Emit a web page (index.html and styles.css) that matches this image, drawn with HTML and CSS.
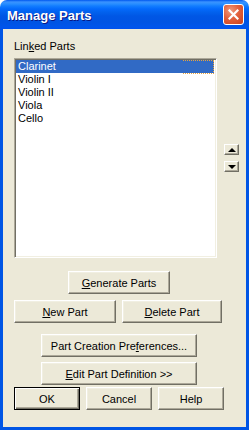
FILE: index.html
```html
<!DOCTYPE html>
<html lang="en">
<head>
    <meta charset="UTF-8">
    <meta name="viewport" content="width=device-width, initial-scale=1.0">
    <title>Manage Parts</title>
    <link rel="stylesheet" href="styles.css">
</head>
<body>

    <div class="window">
        <!-- Caption bar -->
        <div class="titlebar">
            <span class="title">Manage Parts</span>
            <button type="button" class="close" aria-label="Close">
                <svg width="11" height="11" viewBox="0 0 11 11">
                    <path d="M1.5 1.5 L9.5 9.5 M9.5 1.5 L1.5 9.5" stroke="#fff" stroke-width="2.2" stroke-linecap="square"/>
                </svg>
            </button>
        </div>

        <div class="client">
            <label class="listLabel" for="partsList">Lin<u>k</u>ed Parts</label>

            <!-- List of linked parts with reorder buttons -->
            <div class="listRow">
                <ul class="partsList" id="partsList">
                    <li class="selected">Clarinet</li>
                    <li>Violin I</li>
                    <li>Violin II</li>
                    <li>Viola</li>
                    <li>Cello</li>
                </ul>
                <div class="orderButtons">
                    <button type="button" class="arrow up" aria-label="Move up"></button>
                    <button type="button" class="arrow down" aria-label="Move down"></button>
                </div>
            </div>

            <div class="row generateRow">
                <button type="button" class="btn generate"><u>G</u>enerate Parts</button>
            </div>

            <div class="row partRow">
                <button type="button" class="btn newPart"><u>N</u>ew Part</button>
                <button type="button" class="btn deletePart"><u>D</u>elete Part</button>
            </div>

            <div class="row prefsRow">
                <button type="button" class="btn wide">Part Creation Pre<u>f</u>erences...</button>
            </div>

            <div class="row editRow">
                <button type="button" class="btn wide"><u>E</u>dit Part Definition &gt;&gt;</button>
            </div>

            <div class="row dialogRow">
                <button type="button" class="btn dialog default">OK</button>
                <button type="button" class="btn dialog">Cancel</button>
                <button type="button" class="btn dialog">Help</button>
            </div>
        </div>
    </div>

</body>
</html>
```

FILE: styles.css
```css
body { margin: 0; background: #fff; font-family: "Liberation Sans", Arial, sans-serif; font-size: 11px; }

.window {
    width: 249px;
    height: 430px;
    display: flex;
    flex-direction: column;
    box-sizing: border-box;
}

/* XP style caption */
.titlebar {
    height: 29px;
    flex: none;
    display: flex;
    align-items: center;
    padding: 0 5px 0 7px;
    border-radius: 7px 7px 0 0;
    background: linear-gradient(#0058ee 0, #3a93ff 2px, #288eff 4px, #127dff 6px, #0369fc 9px, #0262ee 12px, #0057e5 16px, #0054e3 22px, #0055eb 27px, #0050ee 29px);
}

.title {
    flex: 1;
    color: #fff;
    font-weight: bold;
    font-size: 13px;
    text-shadow: 1px 1px #0a1883;
    padding-top: 1px;
}

.close {
    width: 21px;
    height: 21px;
    padding: 0;
    border: 1px solid #fff;
    border-radius: 3px;
    background: radial-gradient(circle at 35% 30%, #f09a7c 0, #e2603c 45%, #c8401d 100%);
    display: flex;
    align-items: center;
    justify-content: center;
}

.client {
    flex: 1;
    background: #ece9d8;
    border: solid #0055e5;
    border-width: 0 3px 3px 3px;
    box-shadow: inset 0 0 0 0 transparent, 0 1px 0 #0019cf;
    padding: 11px 0 0 11px;
    display: flex;
    flex-direction: column;
}

.listLabel {
    line-height: 13px;
    margin-bottom: 5px;
}

.listRow {
    display: flex;
    align-items: center;
}

.partsList {
    list-style: none;
    margin: 0;
    padding: 0;
    width: 203px;
    height: 200px;
    box-sizing: border-box;
    background: #fff;
    border: 1px solid;
    border-color: #aca899 #fff #fff #aca899;
    box-shadow: inset 1px 1px #716f64, inset -1px -1px #f1efe2;
    padding: 1px 2px 2px 1px;
}

.partsList li {
    height: 13px;
    line-height: 13px;
    padding-left: 2px;
    position: relative;
}

.partsList .selected {
    background: #316ac5;
    color: #fff;
}

/* focus rectangle, only visible past the text */
.partsList .selected::after {
    content: "";
    position: absolute;
    top: 0;
    right: 0;
    width: 30px;
    height: 12px;
    border: 1px dotted #e8a33d;
    border-left: none;
}

.orderButtons {
    display: flex;
    flex-direction: column;
    gap: 6px;
    margin-left: 7px;
}

.arrow {
    width: 15px;
    height: 11px;
    padding: 0;
    background: #ece9d8;
    border: 1px solid;
    border-color: #fff #716f64 #716f64 #fff;
    box-shadow: inset -1px -1px #aca899;
    display: flex;
    align-items: center;
    justify-content: center;
}

.arrow::before {
    content: "";
    border-left: 4px solid transparent;
    border-right: 4px solid transparent;
}

.arrow.up::before { border-bottom: 4px solid #000; }
.arrow.down::before { border-top: 4px solid #000; }

.row { display: flex; }

.btn {
    height: 23px;
    padding: 0;
    font-family: "Liberation Sans", Arial, sans-serif;
    font-size: 11px;
    color: #000;
    background: #ece9d8;
    border: 1px solid;
    border-color: #fff #716f64 #716f64 #fff;
    box-shadow: inset -1px -1px #aca899, inset 1px 1px #f1efe2;
}

.generateRow { margin: 13px 0 0 54px; }
.generate { width: 102px; }

.partRow { margin-top: 6px; gap: 6px; }
.newPart { width: 102px; }
.deletePart { width: 100px; }

.prefsRow { margin: 11px 0 0 27px; }
.editRow { margin: 5px 0 0 27px; }
.wide { width: 156px; }

.dialogRow { margin-top: 2px; gap: 6px; }
.dialog { width: 66px; }

.btn.default {
    border: 1px solid #000;
    box-shadow: inset 1px 1px #fff, inset -1px -1px #716f64, inset -2px -2px #aca899;
}
```
